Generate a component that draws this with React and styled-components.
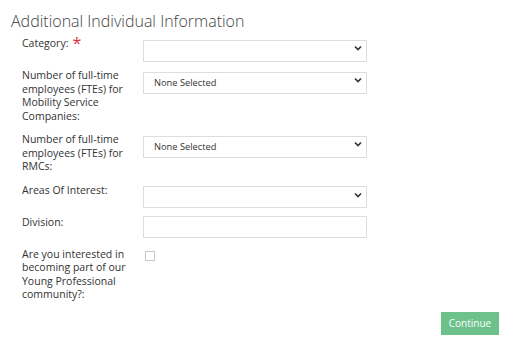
import React from "react";
import styled, { createGlobalStyle } from "styled-components";

const GlobalStyle = createGlobalStyle`
  html, body {
    margin: 0;
    padding: 0;
    background: #fff;
  }
  body {
    font-family: "Open Sans", "Liberation Sans", sans-serif;
    color: #333;
  }
`;

const fields = [
  { label: "Category:", type: "select", required: true },
  { label: "Number of full-time employees (FTEs) for Mobility Service Companies:", type: "select", value: "None Selected" },
  { label: "Number of full-time employees (FTEs) for RMCs:", type: "select", value: "None Selected" },
  { label: "Areas Of Interest:", type: "select" },
  { label: "Division:", type: "text" },
  { label: "Are you interested in becoming part of our Young Professional community?:", type: "checkbox" },
];

const Chevron = () => (
  <svg width="8" height="6" viewBox="0 0 8 6">
    <path d="M1 1.5 L4 4.5 L7 1.5" fill="none" stroke="#333" strokeWidth="1.6" />
  </svg>
);

export default function App() {
  return (
    <>
      <GlobalStyle />
      <Page>
        <Title>Additional Individual Information</Title>
        <Form>
          {fields.map((f, i) => (
            <Row key={i}>
              <Label>
                {f.label}
                {f.required && <Star>*</Star>}
              </Label>
              {f.type === "select" && (
                <SelectWrap>
                  <Select defaultValue={f.value || ""}>
                    <option value={f.value || ""}>{f.value || ""}</option>
                  </Select>
                  <Arrow>
                    <Chevron />
                  </Arrow>
                </SelectWrap>
              )}
              {f.type === "text" && <TextInput type="text" />}
              {f.type === "checkbox" && <Check type="checkbox" />}
            </Row>
          ))}
        </Form>
        <Footer>
          <Button>Continue</Button>
        </Footer>
      </Page>
    </>
  );
}

const Page = styled.main`
  width: 512px;
  padding: 10px 13px 0 11px;
  box-sizing: border-box;
`;

const Title = styled.h1`
  margin: 0 0 5px;
  font-size: 16px;
  line-height: 22px;
  font-weight: 300;
  color: #444;
`;

const Form = styled.div`
  display: flex;
  flex-direction: column;
  gap: 10px;
  padding-left: 11px;
`;

const Row = styled.div`
  display: flex;
  align-items: flex-start;
`;

const Label = styled.label`
  width: 121px;
  font-size: 10.5px;
  line-height: 13.5px;
  color: #333;
`;

const Star = styled.span`
  color: #e0303a;
  font-size: 16px;
  line-height: 10px;
  margin-left: 4px;
  vertical-align: -2px;
`;

const SelectWrap = styled.div`
  position: relative;
  width: 224px;
  height: 22px;
`;

const Select = styled.select`
  appearance: none;
  width: 100%;
  height: 100%;
  margin: 0;
  padding: 0 20px 0 10px;
  box-sizing: border-box;
  border: 1px solid #ddd;
  border-radius: 0;
  background: #fff;
  font-family: "Open Sans", "Liberation Sans", sans-serif;
  font-size: 9.3px;
  color: #333;
  outline: none;
`;

const Arrow = styled.span`
  position: absolute;
  right: 5px;
  top: 8px;
  display: flex;
  pointer-events: none;
`;

const TextInput = styled.input`
  width: 224px;
  height: 22px;
  margin: 0;
  box-sizing: border-box;
  border: 1px solid #ddd;
  border-radius: 0;
  outline: none;
`;

const Check = styled.input`
  appearance: none;
  width: 10px;
  height: 10px;
  margin: 3px 0 0 2px;
  box-sizing: border-box;
  border: 1px solid #c8c8c8;
  background: #fff;
`;

const Footer = styled.div`
  display: flex;
  justify-content: flex-end;
  margin-top: 10px;
`;

const Button = styled.button`
  width: 58px;
  height: 23px;
  border: none;
  background: #6dc28c;
  color: #fff;
  font-family: "Open Sans", "Liberation Sans", sans-serif;
  font-size: 10px;
  padding: 0;
`;
